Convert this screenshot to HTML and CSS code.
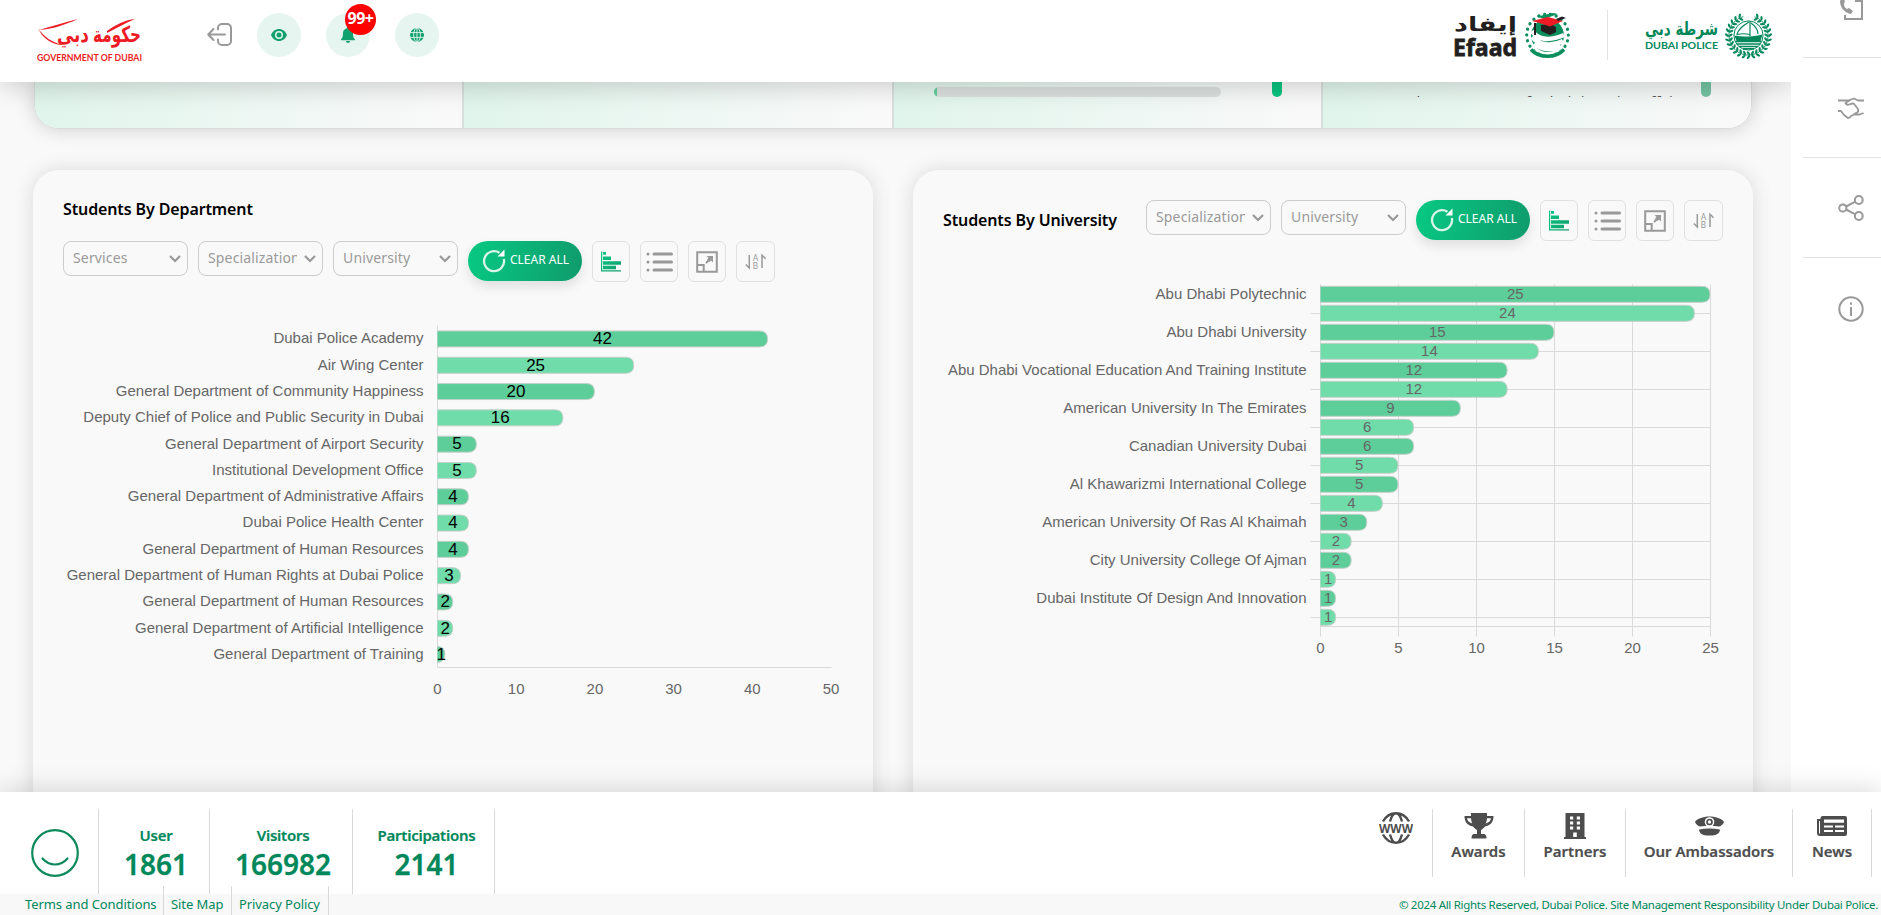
FILE: index.html
```html
<!DOCTYPE html>
<html lang="en">
<head>
<meta charset="utf-8">
<title>Efaad - Dubai Police</title>
<link rel="stylesheet" href="styles.css">
</head>
<body>
<svg class="defs" aria-hidden="true">
  <defs>
    <linearGradient id="gr" x1="0" y1="0" x2="1" y2="1"><stop offset="0" stop-color="#07c983"/><stop offset="1" stop-color="#109b6c"/></linearGradient>
    <symbol id="i-chart" viewBox="0 0 20 21"><path fill="url(#gr)" d="M0 .5h1.2v18.8H20v1.2H0zM2 1h3v2.800H2zM2 5.500h8v3.500H2zM2 10.200h18v3.600H2zM2 14.800h13v3.500H2z"/></symbol>
    <symbol id="i-list" viewBox="0 0 27 20"><g fill="none" stroke="#999" stroke-width="3" stroke-linecap="round"><path d="M8 2h17.500M8 10h17.500M8 18h17.500M2 2h.01M2 10h.01M2 18h.01"/></g></symbol>
    <symbol id="i-expand" viewBox="0 0 22 22"><path fill="none" stroke="#999" stroke-width="2" d="M1.200 1.200h19.600v19.600H1.200zM1.200 14h6.500v6.800M10 12l5.500-5.500"/><path fill="#999" d="M10.500 5h6.500v6.500l-2-2-1.500 1.500-2.500-2.500 1.500-1.500z"/></symbol>
    <symbol id="i-sort" viewBox="0 0 22 17"><path fill="none" stroke="#999" stroke-width="1.500" d="M4.300 2v13L.8 11.500M17 15V2.200l3.600 3.600"/><text x="10.500" y="7.600" class="sortab">A</text><text x="10.500" y="16.400" class="sortab">B</text></symbol>
    <symbol id="i-reset" viewBox="0 0 24 24"><path fill="none" stroke="#d9f5e9" stroke-width="2.300" d="M17.500 3.800A10 10 0 1 0 21.800 10"/><path fill="#fff" d="M22.500.5v7H15.500z"/></symbol>
  </defs>
</svg>

<div class="page">
  <header class="header">
    <svg class="gov" viewBox="0 0 106 46" width="106" height="46">
      <g fill="#ed1c24">
        <text x="56" y="25" class="ar gov-ar" textLength="48" lengthAdjust="spacingAndGlyphs">حكومة</text>
        <text x="20" y="25" class="ar gov-ar" textLength="32" lengthAdjust="spacingAndGlyphs">دبي</text>
        <path d="M1 11c5 8 13 14 25 17-11 0-21-7-25-17zM2 13C16 9 28 5 41 2 28 8 15 12 2 13zM70 14C80 7 88 3 98 2 88 6 80 11 70 16z"/>
        <text x="0" y="43.500" class="gov-en" textLength="105" lengthAdjust="spacingAndGlyphs">GOVERNMENT OF DUBAI</text>
      </g>
    </svg>
    <svg class="logout" width="26" height="24" viewBox="0 0 26 24" fill="none" stroke="#999" stroke-width="2" stroke-linecap="round" stroke-linejoin="round"><path d="M11 6.500V5a4 4 0 0 1 4-4h5a4 4 0 0 1 4 4v13a4 4 0 0 1-4 4h-5a4 4 0 0 1-4-4v-1.500M18 11.500H1.500M6.500 6l-5.300 5.500L6.500 17"/></svg>
    <span class="round"><svg width="16" height="12" viewBox="0 0 16 12"><path fill="#12a06e" fill-rule="evenodd" d="M8 0c3.700 0 6.500 2.300 8 6-1.500 3.700-4.300 6-8 6S1.500 9.700 0 6c1.500-3.700 4.300-6 8-6zm0 2a4 4 0 1 0 0 8 4 4 0 0 0 0-8zm0 1.500a2.500 2.500 0 1 1 0 5 2.500 2.500 0 0 1 0-5z"/></svg></span>
    <span class="round"><svg width="14" height="16" viewBox="0 0 14 16"><path fill="#12a06e" d="M7 0c.7 0 1.200.5 1.200 1.200C10.500 1.800 12 3.600 12 6c0 4 .7 5 1.800 6 .4.500.1 1.300-.6 1.300H.8c-.7 0-1-.8-.6-1.300C1.300 11 2 10 2 6c0-2.400 1.500-4.200 3.800-4.800C5.800.5 6.300 0 7 0zM5 14h4a2 2 0 0 1-4 0z"/></svg><b class="badge">99+</b></span>
    <span class="round"><svg width="14" height="14" viewBox="0 0 14 14"><circle cx="7" cy="7" r="7" fill="#12a06e"/><path d="M0 4.600h14M0 9.400h14M7 0v14" stroke="#e6f5ef" stroke-width=".9"/><ellipse cx="7" cy="7" rx="3.400" ry="7" fill="none" stroke="#e6f5ef" stroke-width=".9"/></svg></span>
    <div class="brands">
      <svg width="118" height="46" viewBox="0 0 118 46">
        <text x="1" y="18" class="ar ef-ar" textLength="63" lengthAdjust="spacingAndGlyphs">إيفاد</text>
        <text x="0" y="42.500" class="ef-en" textLength="64" lengthAdjust="spacingAndGlyphs">Efaad</text>
        <circle cx="94.500" cy="22" r="20.800" fill="none" stroke="#0a8f5c" stroke-width="3.200" stroke-linecap="round" stroke-dasharray=".1 5.900" pathLength="132"/>
        <circle cx="94.500" cy="22.500" r="18.500" fill="#fff"/>
        <circle cx="94.500" cy="22.500" r="16.500" fill="#0a8f5c"/>
        <path d="M79 18c5 8 16 11 32 4M79 24c7 8 19 10 31 4M81 31c8 6 18 6 27 3" fill="none" stroke="#fff" stroke-width="4.600"/>
        <path d="M76 37c8 10 27 10 36 1" fill="none" stroke="#fff" stroke-width="7"/>
        <path d="M78 36.500c8 9 25 9 33 0" fill="none" stroke="#0a8f5c" stroke-width="3.500"/>
        <path d="M88 12l10-1 5 3v5l-6 3-9-4z" fill="#231f20"/>
        <path d="M84 3.500l16-3.500 5 1-14 5z" fill="#0a8f5c"/>
        <path d="M79 8l16-4 15 4-13 5.500-9-3z" fill="#ed1c24"/>
        <path d="M103 6l6-2.500 4 1.500-8 3zM81 10h2v12h-2z" fill="#231f20"/>
      </svg>
      <i class="brand-line"></i>
      <svg width="128" height="46" viewBox="0 0 128 46" fill="#00875a">
        <text x="0" y="21.500" class="ar pol-ar" textLength="73" lengthAdjust="spacingAndGlyphs">شرطة دبي</text>
        <text x="0" y="36" class="pol-en" textLength="73" lengthAdjust="spacingAndGlyphs">DUBAI POLICE</text>
        <g id="laurel"></g>
        <circle cx="103.500" cy="22.500" r="14.600" fill="#fff" stroke="#00875a"/>
        <path d="M90.500 23.500c5 1 20 1 26-1l-1.500 4.500H92zM90.500 28.500h26M91.500 31h24M94 33.500h19M98 35.800h11" stroke="#00875a" stroke-width="1.400"/>
        <path d="M105 8v15M104 9c-7 4-11 8-12 12.500 5-1 9-1 12.500 0M106 10c4 3 7 7 7 11" fill="none" stroke="#00875a" stroke-width="1.200"/>
      </svg>
    </div>
  </header>

  <main class="main">
    <section class="strip">
      <div class="cell"></div>
      <div class="cell"></div>
      <div class="cell cell-bar"><div class="progress"><i></i></div><i class="thumb"></i></div>
      <div class="cell cell-text"><div class="clip"><span>General Department Of Administrative Affairs</span></div><i class="thumb pale"></i></div>
    </section>

    <div class="cards">
      <section class="card">
        <h2>Students By Department</h2>
        <div class="tools">
          <div class="select"><span>Services</span><svg width="12" height="8" viewBox="0 0 12 8"><path d="M1 1l5 5 5-5"/></svg></div>
          <div class="select"><span>Specialization</span><svg width="12" height="8" viewBox="0 0 12 8"><path d="M1 1l5 5 5-5"/></svg></div>
          <div class="select"><span>University</span><svg width="12" height="8" viewBox="0 0 12 8"><path d="M1 1l5 5 5-5"/></svg></div>
          <div class="clear"><svg width="24" height="24"><use href="#i-reset"/></svg><span>CLEAR ALL</span></div>
          <div class="tool"><svg width="20" height="21"><use href="#i-chart"/></svg></div>
          <div class="tool"><svg width="27" height="20"><use href="#i-list"/></svg></div>
          <div class="tool"><svg width="22" height="22"><use href="#i-expand"/></svg></div>
          <div class="tool"><svg width="22" height="17"><use href="#i-sort"/></svg></div>
        </div>
        <svg class="chart" id="departments" width="780" height="430"></svg>
      </section>
      <section class="card">
        <div class="card-head">
          <h2>Students By University</h2>
          <div class="tools">
            <div class="select"><span>Specialization</span><svg width="12" height="8" viewBox="0 0 12 8"><path d="M1 1l5 5 5-5"/></svg></div>
            <div class="select"><span>University</span><svg width="12" height="8" viewBox="0 0 12 8"><path d="M1 1l5 5 5-5"/></svg></div>
            <div class="clear"><svg width="24" height="24"><use href="#i-reset"/></svg><span>CLEAR ALL</span></div>
            <div class="tool"><svg width="20" height="21"><use href="#i-chart"/></svg></div>
            <div class="tool"><svg width="27" height="20"><use href="#i-list"/></svg></div>
            <div class="tool"><svg width="22" height="22"><use href="#i-expand"/></svg></div>
            <div class="tool"><svg width="22" height="17"><use href="#i-sort"/></svg></div>
          </div>
        </div>
        <svg class="chart" id="universities" width="780" height="430"></svg>
      </section>
    </div>
  </main>
</div>

<aside class="rail">
  <div class="rail-item"><svg width="26" height="32" viewBox="0 0 26 32" fill="none" stroke="#999" stroke-width="2"><path d="M7 3h17v24H7v-4M18 3v6h6"/><path d="M2 9c0 7 5 12 11 13l2-3-4-3-2 1c-2-1-3-3-3-5l1-3-3-3z" fill="#999" stroke="none"/></svg></div>
  <div class="rail-item"><svg width="26" height="22" viewBox="0 0 26 22" fill="none" stroke="#999" stroke-width="1.800" stroke-linejoin="round"><path d="M0 3.500h10l6-2 4 2h6M13 2.500L7.500 6c1 2 3 2 5 1l3-.7 4 5c1 1.500 1 3 0 4l-4 2M0 14h3l3 4 4 3c1.500 0 2.500-1 3-2l3.500-1.500h5l4-1.500"/></svg></div>
  <div class="rail-item"><svg width="26" height="26" viewBox="0 0 26 26" fill="none" stroke="#999" stroke-width="2"><circle cx="4.800" cy="13" r="3.600"/><circle cx="20.800" cy="5" r="3.900"/><circle cx="20.800" cy="21" r="3.900"/><path d="M8 11.500l9.500-4.800M8 14.500l9.500 4.800"/></svg></div>
  <div class="rail-item"><svg width="26" height="26" viewBox="0 0 26 26" fill="none" stroke="#999" stroke-width="2"><circle cx="13" cy="13" r="11.700"/><path d="M13 11v9M13 6.500v2.200"/></svg></div>
</aside>

<footer class="footer">
  <div class="foot-top">
    <div class="stats">
      <div class="smile"><svg width="48" height="48" viewBox="0 0 48 48" fill="none" stroke="#0d8a5c" stroke-width="2.200" stroke-linecap="round"><circle cx="24" cy="24" r="22.800"/><path d="M11.500 29.500c7 8 18 8 25 0"/></svg></div>
      <div class="stat s1"><span>User</span><b>1861</b></div>
      <div class="stat s2"><span>Visitors</span><b>166982</b></div>
      <div class="stat s3"><span>Participations</span><b>2141</b></div>
    </div>
    <nav class="links">
      <a class="l0"><svg width="34" height="34" viewBox="0 0 34 34"><g fill="none" stroke="#4d4d4d" stroke-width="2.400"><path d="M4 10.500C7 5 11 2.200 17 2.200S27 5 30 10.500M4 23.500C7 29 11 31.800 17 31.800S27 29 30 23.500M11 10.500C12.500 5 14.500 2.200 17 2.200s4.500 2.800 6 8.300M11 23.500c1.500 5.500 3.500 8.300 6 8.300s4.500-2.800 6-8.300"/></g><text x="17" y="21.500" class="www" textLength="34" lengthAdjust="spacingAndGlyphs">WWW</text></svg></a>
      <a class="l1"><svg width="30" height="26" viewBox="0 0 30 26" fill="#4d4d4d"><path d="M7 0h16v3h6.500c0 6-3 9.500-8.500 10.500-1.500 2-3 3-4 3.500v4h3c1.500 0 2.500 1.500 2.500 4.500h-15c0-3 1-4.500 2.500-4.500h3v-4c-1-.5-2.500-1.500-4-3.500C3.500 12.500.5 9 .5 3H7z"/><path d="M3 5.300h4c.1 2 .5 3.600 1.200 5.200C5 9.500 3.400 8 3 5.300zM27 5.300h-4c-.1 2-.5 3.600-1.200 5.200C25 9.500 26.600 8 27 5.300z" fill="#fff"/></svg><span>Awards</span></a>
      <a class="l2"><svg width="22" height="26" viewBox="0 0 22 26"><path fill="#4d4d4d" d="M1.500 0h19v24H22v2H0v-2h1.500z"/><path fill="#fff" d="M6 3.500h3.200v3H6zM12.800 3.500H16v3h-3.200zM6 8.500h3.200v3H6zM12.800 8.500H16v3h-3.200zM6 13.500h3.200v3H6zM12.800 13.500H16v3h-3.200zM9.200 19.500h3.600V24H9.200z"/></svg><span>Partners</span></a>
      <a class="l3"><svg width="29" height="20" viewBox="0 0 29 20"><path fill="#4d4d4d" d="M0 6C1 3 8 .5 14.500.5S28 3 29 6c-1 2.500-3 4-5 4.500H5C3 10 1 8.500 0 6zM4 13.500c7-1.500 14-1.500 21 0-.5 4-3 6-10.500 6S4.500 17.500 4 13.500z"/><circle cx="14.500" cy="6" r="4.800" fill="#fff"/><circle cx="14.500" cy="6" r="2.500" fill="none" stroke="#4d4d4d" stroke-width="1.700"/><path d="M5 11.800c6-1.500 13-1.500 19 0" stroke="#fff" stroke-width="1.500" fill="none"/></svg><span>Our Ambassadors</span></a>
      <a class="l4"><svg width="30" height="20" viewBox="0 0 30 20"><path fill="#4d4d4d" d="M5 0h23a2 2 0 0 1 2 2v16a2 2 0 0 1-2 2H3a3 3 0 0 1-3-3V3h3.500V1.500z"/><path fill="#fff" d="M2 5h1v12.500H2zM7 3.500h20v3.200H7zM7 9.500h9v2H7zM18 9.500h9v2h-9zM7 14h9v2H7zM18 14h9v2h-9z"/></svg><span>News</span></a>
    </nav>
  </div>
  <div class="foot-bottom">
    <div class="legal"><a class="t1">Terms and Conditions</a><a class="t2">Site Map</a><a class="t3">Privacy Policy</a></div>
    <div class="copy">© 2024 All Rights Reserved, Dubai Police. Site Management Responsibility Under Dubai Police.</div>
  </div>
</footer>
<script src="charts.js"></script>
</body>
</html>
```

FILE: styles.css
```css
* { box-sizing: border-box; }
body { margin: 0; height: 915px; overflow: hidden; display: grid; grid-template-columns: 1791px 90px; grid-template-rows: 792px 123px; background: #f9f9f9; font-family: "Noto Sans", "Open Sans", sans-serif; }
.defs { position: absolute; width: 0; height: 0; }
.page { display: flex; flex-direction: column; height: 792px; overflow: hidden; }
.header { position: relative; z-index: 3; flex: none; height: 82px; background: #fff; display: flex; align-items: flex-start; box-shadow: 0 3px 26px rgba(0,0,0,.2); }
.header svg { overflow: visible; }
.gov { margin: 17px 0 0 37px; }
.ar { font-family: "DejaVu Sans", sans-serif; font-weight: 700; }
.gov-ar { font-size: 22px; }
.gov-en { font: 700 8.500px Lato, sans-serif; }
.ef-ar { font-size: 20px; fill: #231f20; }
.ef-en { font: 700 24px "Noto Sans", sans-serif; fill: #231f20; stroke: #231f20; stroke-width: .8; }
.pol-ar { font-size: 18px; }
.pol-en { font: 700 10px Lato, sans-serif; }
.logout { margin: 23px 24px 0 64px; }
.round { position: relative; width: 44px; height: 44px; margin: 13px 25px 0 0; border-radius: 50%; background: #e6f5ef; display: flex; align-items: center; justify-content: center; }
.badge { position: absolute; left: 19px; top: -9px; width: 31px; height: 31px; border-radius: 50%; background: #f00; color: #fff; font-size: 16px; line-height: 29px; text-align: center; letter-spacing: -.5px; }
.brands { margin: 13px 18px 0 auto; display: flex; }
.brand-line { width: 1px; height: 50px; margin: -3px 37px 0 36px; background: #e3e3e3; }

.main { padding: 0 38px 0 34px; }
.strip { height: 47px; display: grid; grid-template-columns: 429px 430px 429px 430px; width: 1718px; border-radius: 0 0 24px 24px; overflow: hidden; box-shadow: 0 0 20px rgba(0,0,0,.18); border: 1px solid #d9dedc; border-top: 0; }
.cell { background: linear-gradient(97deg, #e0f5ec 0, #f9f9f9 95%); border-right: 2px solid #d9dfdd; display: flex; align-items: flex-start; }
.cell:last-child { border: 0; }
.progress { width: 287px; height: 10px; margin: 5px 51px 0 40px; border-radius: 5px; background: #dbdfdd; overflow: hidden; }
.progress i { display: block; width: 3px; height: 10px; background: #5fcf9d; }
.thumb { width: 10px; height: 15px; border-radius: 0 0 5px 5px; background: #09c480; }
.pale { background: #73c4a2; }
.clip { width: 336px; height: 15px; margin-left: 42px; overflow: hidden; }
.clip span { display: block; margin-top: 8.500px; font: 15px/20px "Noto Sans", sans-serif; color: #555; white-space: nowrap; }

.cards { display: grid; grid-template-columns: 840px 840px; gap: 40px; margin: 41px 0 0 -1px; }
.card { height: 700px; padding: 30px; border-radius: 26px; background: #f9f9f9; box-shadow: 0 0 20px rgba(0,0,0,.13); }
h2 { margin: 0; font-size: 16px; line-height: 20px; font-weight: 600; color: #000; white-space: nowrap; letter-spacing: -.12px; }
.card > h2 { height: 41px; margin-top: -1px; margin-bottom: 1px; }
.card-head { display: flex; justify-content: space-between; align-items: center; height: 41px; }
.card-head h2 { margin-top: -2px; }
.tools { display: flex; gap: 10px; align-items: flex-start; height: 41px; }
.select { width: 125px; height: 35px; padding: 0 6px 2px 9px; border: 1px solid #ccc; border-radius: 8px; display: flex; align-items: center; justify-content: space-between; color: #999; font-size: 14px; }
.select span { width: 89px; overflow: hidden; white-space: nowrap; letter-spacing: .15px; }
.select svg { fill: none; stroke: #999; stroke-width: 2.200; margin-top: 2px; }
.clear { width: 114px; height: 40px; border-radius: 20px; padding: 0 0 0 14px; display: flex; align-items: center; gap: 4px; background: linear-gradient(100deg, #07c983, #109b6c); color: #fff; box-shadow: 0 6px 12px rgba(0,0,0,.1); font-size: 12px; white-space: nowrap; }
.clear span { margin-top: -4px; letter-spacing: 0; }
.tool { width: 38px; height: 41px; border: 1px solid #e0e0e0; border-radius: 6px; display: flex; align-items: center; justify-content: center; }
.tool:last-child { width: 39px; }
.sortab { font: 8.500px Roboto, sans-serif; fill: #999; text-anchor: middle; }
.chart { display: block; font-family: "Liberation Sans", Arial, sans-serif; font-size: 15px; }

.rail { background: #fff; padding-left: 12px; height: 792px; overflow: hidden; }
.rail-item { height: 100px; border-bottom: 1px solid #e3e3e3; display: flex; align-items: center; justify-content: center; padding-left: 17px; }
.rail-item:first-child { margin-top: -42px; }
.rail-item:last-child { border: 0; padding-top: 2px; }

.footer { position: relative; z-index: 4; grid-column: 1 / 3; box-shadow: 0 -3px 24px rgba(0,0,0,.14); background: #fff; }
.foot-top { height: 102px; display: flex; justify-content: space-between; padding-top: 17px; }
.stats, .links { display: flex; }
.smile { width: 99px; border-right: 1px solid #d9d9d9; padding: 20px 0 0 31px; }
.stat { border-right: 1px solid #d9d9d9; color: #00875a; display: flex; flex-direction: column; align-items: center; padding: 15px 0 0 4px; font-weight: 600; }
.stat span { font-size: 15px; line-height: 22px; letter-spacing: -.25px; font-weight: 600; -webkit-text-stroke: .2px; }
.stat b { font-size: 28px; line-height: 34px; margin-top: 1px; font-weight: 600; letter-spacing: 0; -webkit-text-stroke: .3px; }
.s1 { width: 111px; } .s2 { width: 143px; } .s3 { width: 142px; padding-left: 6px; }
.links { margin-right: 9px; }
.links a { height: 68px; border-right: 1px solid #d9d9d9; display: flex; flex-direction: column; align-items: center; color: #4d4d4d; font-weight: 600; font-size: 15px; line-height: 22px; -webkit-text-stroke: .2px; }
.links svg { margin-top: 4px; height: 26px; }
.l0 { width: 74px; } .l1 { width: 92px; } .l2 { width: 101px; } .l3 { width: 167px; } .l4 { width: 79px; }
.links .l0 svg { height: 34px; margin-top: 2px; }
.links span { margin-top: 1px; white-space: nowrap; }
.www { font: 700 12px "Noto Sans", sans-serif; fill: #4d4d4d; text-anchor: middle; }
.foot-bottom { height: 21px; background: #f8f8f8; display: flex; justify-content: space-between; color: #00875a; font-size: 13px; line-height: 21px; white-space: nowrap; }
.legal { display: flex; margin: -8px 0 0 25px; height: 29px; letter-spacing: -.08px; }
.legal a { border-right: 1px solid #d9d9d9; padding-top: 8px; margin-right: 7px; }
.t1 { width: 139px; } .t2 { width: 61px; } .t3 { width: 90px; }
.copy { font-size: 11.500px; margin-right: 3px; letter-spacing: -.3px; }
```

FILE: charts.js
```js
const NS = "http://www.w3.org/2000/svg";
function add(svg, tag, attrs, text) {
  const e = document.createElementNS(NS, tag);
  for (const k in attrs) e.setAttribute(k, attrs[k]);
  if (text !== undefined) e.textContent = text;
  svg.appendChild(e);
}
function draw(o) {
  const svg = document.getElementById(o.id);
  const bottom = o.top + o.pitch * o.rows.length;
  const grid = (x1, y1, x2, y2) => add(svg, "path", { d: `M${x1} ${y1}L${x2} ${y2}`, stroke: "#dadada", fill: "none" });
  const snap = v => Math.floor(v) + 0.5;
  const right = snap(o.x + o.max * o.unit);
  for (let t = 0; t <= o.max; t += o.step) {
    const x = snap(o.x + t * o.unit);
    if (o.grid) grid(x, o.top, x, bottom + 10);
    add(svg, "text", { x: o.x + t * o.unit, y: o.tickY, "text-anchor": "middle", fill: "#666" }, t);
  }
  grid(snap(o.x), o.top, snap(o.x), bottom);
  grid(o.x, snap(bottom), right, snap(bottom));
  o.rows.forEach(([label, n], i) => {
    const c = o.top + o.pitch * (i + 0.5);
    if (o.grid && i % 2) grid(o.x - 10, snap(c), right, snap(c));
    const w = n * o.unit - 0.5, r = Math.min(8, w), y = c - 7.7;
    add(svg, "path", { d: `M${o.x} ${y}h${w - r}q${r} 0 ${r} ${r}q0 8 ${-r} ${16 - r}h${r - w}`, fill: i % 2 ? "#70dcaa" : "#5dce9a", stroke: "#c4d0ca" });
    if (label) add(svg, "text", { x: o.x - 14, y: c + 4.7, "text-anchor": "end", fill: "#666" }, label);
    add(svg, "text", { x: o.x + w / 2, y: c + o.valueDy, "text-anchor": "middle", "font-size": o.valueSize, fill: o.valueFill }, n);
  });
}
// Laurel wreath round the police emblem: pairs of small leaves along a ring
const laurel = document.getElementById("laurel");
add(laurel, "circle", { cx: 103.5, cy: 22.5, r: 19.6, fill: "none", stroke: "#00875a", "stroke-width": 0.8, "stroke-dasharray": "111 12", transform: "rotate(-72 103.5 22.5)" });
for (let a = 24; a <= 336; a += 13) {
  const lean = a < 180 ? 38 : -38;
  for (const r of [17.8, 21.6]) {
    const tilt = r > 20 ? lean : 180 - lean;
    add(laurel, "ellipse", { cx: 103.5, cy: 22.5 - r, rx: 1.15, ry: 2.3, transform: `rotate(${a} 103.5 22.5) rotate(${-tilt} 103.5 ${22.5 - r})` });
  }
}
draw({ id: "departments", x: 374.5, top: 43.5, pitch: 26.3, unit: 7.87, max: 50, step: 10, tickY: 412, valueDy: 5.6, valueSize: 17, valueFill: "#000", rows: [
  ["Dubai Police Academy", 42], ["Air Wing Center", 25], ["General Department of Community Happiness", 20],
  ["Deputy Chief of Police and Public Security in Dubai", 16], ["General Department of Airport Security", 5],
  ["Institutional Development Office", 5], ["General Department of Administrative Affairs", 4],
  ["Dubai Police Health Center", 4], ["General Department of Human Resources", 4],
  ["General Department of Human Rights at Dubai Police", 3], ["General Department of Human Resources", 2],
  ["General Department of Artificial Intelligence", 2], ["General Department of Training", 1]] });
draw({ id: "universities", x: 377.5, top: 43.5, pitch: 19, unit: 15.6, max: 25, step: 5, grid: true, tickY: 412, valueDy: 4.6, valueSize: 15, valueFill: "#666", rows: [
  ["Abu Dhabi Polytechnic", 25], ["", 24], ["Abu Dhabi University", 15], ["", 14],
  ["Abu Dhabi Vocational Education And Training Institute", 12], ["", 12], ["American University In The Emirates", 9], ["", 6],
  ["Canadian University Dubai", 6], ["", 5], ["Al Khawarizmi International College", 5], ["", 4],
  ["American University Of Ras Al Khaimah", 3], ["", 2], ["City University College Of Ajman", 2], ["", 1],
  ["Dubai Institute Of Design And Innovation", 1], ["", 1]] });
```
